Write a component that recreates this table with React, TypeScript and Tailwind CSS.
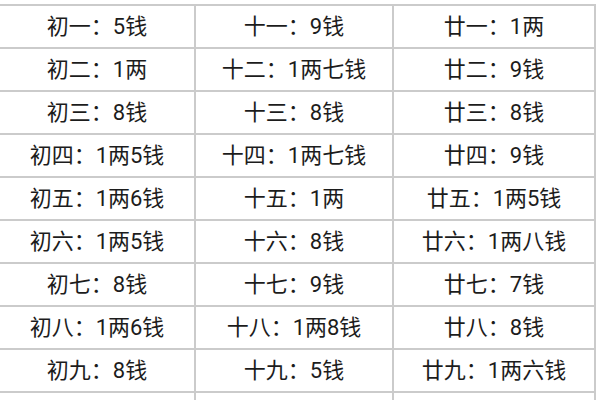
const rows: string[][] = [
  ["初一：5钱", "十一：9钱", "廿一：1两"],
  ["初二：1两", "十二：1两七钱", "廿二：9钱"],
  ["初三：8钱", "十三：8钱", "廿三：8钱"],
  ["初四：1两5钱", "十四：1两七钱", "廿四：9钱"],
  ["初五：1两6钱", "十五：1两", "廿五：1两5钱"],
  ["初六：1两5钱", "十六：8钱", "廿六：1两八钱"],
  ["初七：8钱", "十七：9钱", "廿七：7钱"],
  ["初八：1两6钱", "十八：1两8钱", "廿八：8钱"],
  ["初九：8钱", "十九：5钱", "廿九：1两六钱"],
  ["", "", ""],
];

export default function App() {
  return (
    <div className="h-[400px] w-[600px] overflow-hidden bg-white pt-[4px] font-['Roboto','Noto_Sans_CJK_SC',sans-serif] text-[#1c1c1c]">
      <div className="grid w-[596px] grid-cols-[196px_198px_202px] border-t-2 border-[#cbcbcb]">
        {rows.map((row, i) =>
          row.map((cell, j) => (
            <div
              key={`${i}-${j}`}
              className="flex h-[43px] items-center justify-center border-r-2 border-b-2 border-[#cbcbcb] text-[22px] leading-none"
            >
              {cell}
            </div>
          ))
        )}
      </div>
    </div>
  );
}
